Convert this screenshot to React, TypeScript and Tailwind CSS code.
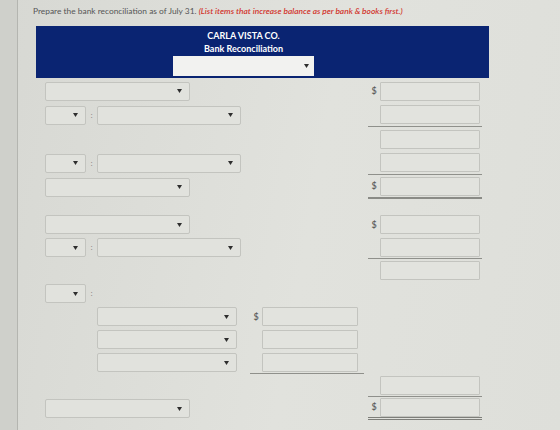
import type { ReactNode } from 'react';

const font = { fontFamily: 'Lato, "Noto Sans", sans-serif' };

function Caret() {
  return (
    <svg width="5" height="4" viewBox="0 0 5 4" className="shrink-0">
      <path d="M0 0h5L2.5 4z" fill="#2e2e2e" />
    </svg>
  );
}

function Select({ width }: { width: string }) {
  return (
    <div className={`${width} h-[19px] shrink-0 flex items-center justify-end pr-[7px] rounded-[2px] border border-[#c3c4bf] bg-[#e1e2dd]`}>
      <Caret />
    </div>
  );
}

function Amount({ width = 'w-[100px]' }: { width?: string }) {
  return <div className={`${width} h-[19px] shrink-0 rounded-[1px] border border-[#c3c4bf] bg-[#e2e3de]`} />;
}

function Colon() {
  return <span className="w-[11px] text-center text-[7px] leading-none text-[#7a7a7a]">:</span>;
}

// small select + colon + wide select, used for the adjustment lines
function LabelPair() {
  return (
    <div className="flex items-center">
      <Select width="w-[41px]" />
      <Colon />
      <Select width="w-[144px]" />
    </div>
  );
}

type Line = 'none' | 'single' | 'thick' | 'double';

const lineClass: Record<Line, string> = {
  none: '',
  single: 'border-b border-[#8f908b]',
  thick: 'border-b-2 border-[#8a8b86]',
  double: 'border-b-[3px] border-double border-[#7d7e79]',
};

function Row({
  left,
  mid,
  right,
  h = 'h-[24px]',
}: {
  left?: ReactNode;
  mid?: { dollar?: boolean; line?: Line };
  right?: { dollar?: boolean; line?: Line };
  h?: string;
}) {
  return (
    <div className={`flex ${h}`}>
      <div className="w-[214px] pl-[9px] flex items-center">{left}</div>
      <div className="w-[118px] flex">
        {mid && (
          <div className={`flex items-center w-[114px] ${lineClass[mid.line ?? 'none']}`}>
            <span className="w-[12px] text-[9px] font-semibold text-[#5e5e5e] text-center">{mid.dollar ? '$' : ''}</span>
            <Amount width="w-[96px]" />
          </div>
        )}
      </div>
      <div className="w-[116px] flex">
        {right && (
          <div className={`flex items-center w-[114px] ${lineClass[right.line ?? 'none']}`}>
            <span className="w-[12px] text-[9px] font-semibold text-[#5e5e5e] text-center">{right.dollar ? '$' : ''}</span>
            <Amount />
          </div>
        )}
      </div>
    </div>
  );
}

const Indented = () => (
  <div className="pl-[52px]">
    <Select width="w-[140px]" />
  </div>
);

export default function App() {
  return (
    <div
      className="w-[560px] h-[430px] overflow-hidden flex bg-[linear-gradient(100deg,#d7d8d3,#e1e2dd_55%,#dedfda)]"
      style={font}
    >
      <div className="w-[18px] h-full shrink-0 bg-[#cfd0cb] border-r border-[#b4b5b0]" />

      <div className="w-[500px] pl-[15px] pt-[6px] flex flex-col items-start">
        <p className="text-[8.4px] leading-[11px] text-[#555] whitespace-nowrap">
          Prepare the bank reconciliation as of July 31.{' '}
          <span className="italic font-semibold text-[#d2362e]">
            (List items that increase balance as per bank &amp; books first.)
          </span>
        </p>

        <div className="ml-[3px] mt-[9px] w-[453px]">
          {/* heading band */}
          <div className="h-[52px] bg-[#0a2472] flex flex-col items-center pt-[3px] pr-[38px]">
            <div className="text-[9px] leading-[13px] font-bold text-white">CARLA VISTA CO.</div>
            <div className="text-[9px] leading-[13px] font-bold text-white">Bank Reconciliation</div>
            <div className="mt-[1px] w-[141px] h-[20px] bg-[#f2f2f0] flex items-center justify-end pr-[5px]">
              <Caret />
            </div>
          </div>

          <div className="mt-[1px] flex flex-col">
            <Row left={<Select width="w-[145px]" />} right={{ dollar: true }} />
            <Row left={<LabelPair />} right={{ line: 'single' }} />
            <Row right={{}} />
            <Row left={<LabelPair />} right={{ line: 'single' }} />
            <Row left={<Select width="w-[145px]" />} right={{ dollar: true, line: 'thick' }} />

            <div className="h-[14px]" />

            <Row h="h-[23px]" left={<Select width="w-[145px]" />} right={{ dollar: true }} />
            <Row h="h-[23px]" left={<LabelPair />} right={{ line: 'single' }} />
            <Row h="h-[23px]" right={{}} />
            <Row
              h="h-[23px]"
              left={
                <div className="flex items-center">
                  <Select width="w-[41px]" />
                  <Colon />
                </div>
              }
            />
            <Row h="h-[23px]" left={<Indented />} mid={{ dollar: true }} />
            <Row h="h-[23px]" left={<Indented />} mid={{}} />
            <Row h="h-[23px]" left={<Indented />} mid={{ line: 'single' }} />
            <Row h="h-[23px]" right={{ line: 'single' }} />
            <Row h="h-[23px]" left={<Select width="w-[145px]" />} right={{ dollar: true, line: 'double' }} />
          </div>
        </div>
      </div>
    </div>
  );
}
